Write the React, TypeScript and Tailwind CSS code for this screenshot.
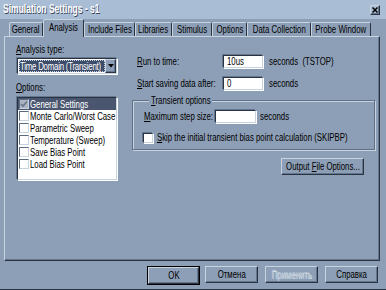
import React from "react";

const SUNKEN =
  "border border-t-[#2a3342] border-l-[#2a3342] border-r-[#c8d3e0] border-b-[#c8d3e0] shadow-[-1px_-1px_0_#66788f,1px_1px_0_#ffffff]";
const RAISED =
  "border border-t-[#c8d3e0] border-l-[#c8d3e0] border-r-[#2a3342] border-b-[#2a3342] shadow-[inset_-1px_-1px_0_#64768e]";

function T({ children, className = "" }: { children: React.ReactNode; className?: string }) {
  return (
    <span className={"inline-block whitespace-nowrap origin-left shrink-0 scale-x-[0.71] " + className}>
      {children}
    </span>
  );
}

function TC({ children, className = "" }: { children: React.ReactNode; className?: string }) {
  return (
    <span className={"inline-block whitespace-nowrap origin-center shrink-0 scale-x-[0.71] " + className}>
      {children}
    </span>
  );
}

function Tab({ label, w, selected }: { label: string; w: string; selected?: boolean }) {
  if (selected) {
    return (
      <div
        className={
          "relative z-10 -mb-[1px] h-[18px] bg-[#8d9fb6] border-t border-l border-r border-t-[#c8d3e0] border-l-[#c8d3e0] border-r-[#2a3342] rounded-t-[2px] flex items-center justify-center pb-[2px] " +
          w
        }
      >
        <TC>{label}</TC>
      </div>
    );
  }
  return (
    <div
      className={
        "h-[14px] border-t border-l border-r border-t-[#c8d3e0] border-l-[#c8d3e0] border-r-[#2a3342] rounded-t-[2px] flex items-center justify-center " +
        w
      }
    >
      <TC>{label}</TC>
    </div>
  );
}

function ListItem({ label, selected }: { label: string; selected?: boolean }) {
  return (
    <div className={"h-[12px] flex items-center " + (selected ? "bg-[#4a5670] text-white" : "")}>
      <div
        className={
          "ml-[1px] w-[10px] h-[10px] shrink-0 border border-t-[#5b6b82] border-l-[#5b6b82] border-r-[#c8d3e0] border-b-[#c8d3e0] flex items-center justify-center " +
          (selected ? "bg-[#aab4c2]" : "bg-white")
        }
      >
        {selected && (
          <svg width="8" height="8" viewBox="0 0 8 8">
            <path d="M1 4 L3 6 L7 1.5" stroke="#6c7686" strokeWidth="1.6" fill="none" />
          </svg>
        )}
      </div>
      <T className="ml-[1px] leading-[12px]">{label}</T>
    </div>
  );
}

function Btn({ children, className = "", disabled }: { children: React.ReactNode; className?: string; disabled?: boolean }) {
  return (
    <div
      className={
        "h-[17px] flex items-center justify-center " +
        RAISED +
        " " +
        (disabled ? "text-[#b9c6d6] [text-shadow:1px_1px_0_#d9e1ea] " : "") +
        className
      }
    >
      <TC>{children}</TC>
    </div>
  );
}

export default function App() {
  return (
    <div className="w-[386px] h-[290px] bg-[#8d9fb6] font-['Liberation_Sans',Arial,sans-serif] text-[11px] leading-[13px] text-black overflow-hidden flex flex-col border-b border-b-[#2a3342]">
      {/* Title bar */}
      <div className="h-[19px] shrink-0 bg-[#a9bdd5] flex items-center justify-between pl-[3px] pr-[6px]">
        <span className="inline-block whitespace-nowrap scale-x-[0.71] origin-left font-bold text-[12px] text-white [text-shadow:1px_1px_0_#3a465c]">
          Simulation Settings - s1
        </span>
        <div className={"w-[10px] h-[10px] bg-[#a9bdd5] flex items-center justify-center " + RAISED}>
          <svg width="6" height="6" viewBox="0 0 6 6">
            <path d="M0.5 0.5 L5.5 5.5 M5.5 0.5 L0.5 5.5" stroke="#000" strokeWidth="1.5" />
          </svg>
        </div>
      </div>

      {/* Tabs */}
      <div className="h-[17px] shrink-0 flex items-end pl-[9px]">
        <Tab label="General" w="w-[34px]" />
        <Tab label="Analysis" w="w-[41px]" selected />
        <Tab label="Include Files" w="w-[51px]" />
        <Tab label="Libraries" w="w-[37px]" />
        <Tab label="Stimulus" w="w-[40px]" />
        <Tab label="Options" w="w-[35px]" />
        <Tab label="Data Collection" w="w-[64px]" />
        <Tab label="Probe Window" w="w-[60px]" />
      </div>

      {/* Panel */}
      <div className={"ml-[4px] w-[376px] h-[225px] shrink-0 flex pt-[6px] pl-[11px] " + RAISED}>
        {/* Left column */}
        <div className="w-[102px] shrink-0 flex flex-col">
          <div className="h-[13px]">
            <T>
              <u>A</u>nalysis type:
            </T>
          </div>
          <div className={"mt-[2px] mx-[1px] h-[16px] bg-white flex items-stretch " + SUNKEN}>
            <div className="ml-[1px] my-[1px] w-[86px] bg-[#3d4c6a] text-white flex items-center pl-[1px] outline outline-1 outline-dotted outline-[#c8d3e0] -outline-offset-1">
              <T className="leading-[12px] tracking-[-0.3px]">Time Domain (Transient)</T>
            </div>
            <div className={"ml-auto w-[12px] bg-[#8d9fb6] flex items-center justify-center " + RAISED}>
              <svg width="6" height="4" viewBox="0 0 6 4">
                <path d="M0 0 L6 0 L3 3.5 Z" fill="#000" />
              </svg>
            </div>
          </div>
          <div className="mt-[7px] h-[13px]">
            <T>
              <u>O</u>ptions:
            </T>
          </div>
          <div className={"mt-[3px] mx-[1px] h-[83px] bg-white flex flex-col " + SUNKEN}>
            <ListItem label="General Settings" selected />
            <ListItem label="Monte Carlo/Worst Case" />
            <ListItem label="Parametric Sweep" />
            <ListItem label="Temperature (Sweep)" />
            <ListItem label="Save Bias Point" />
            <ListItem label="Load Bias Point" />
          </div>
        </div>

        {/* Right column */}
        <div className="ml-[14px] w-[243px] shrink-0 flex flex-col">
          <div className="mt-[11px] h-[15px] flex items-center">
            <div className="w-[90px] pl-[5px] shrink-0">
              <T>
                <u>R</u>un to time:
              </T>
            </div>
            <div className={"ml-[1px] w-[40px] h-[13px] shrink-0 bg-white flex items-center pl-[3px] " + SUNKEN}>
              <T>10us</T>
            </div>
            <div className="ml-[6px]">
              <T>seconds&nbsp;&nbsp;(TSTOP)</T>
            </div>
          </div>
          <div className="mt-[7px] h-[15px] flex items-center">
            <div className="w-[90px] pl-[5px] shrink-0">
              <T>
                <u>S</u>tart saving data after:
              </T>
            </div>
            <div className={"ml-[1px] w-[40px] h-[13px] shrink-0 bg-white flex items-center pl-[3px] " + SUNKEN}>
              <T>0</T>
            </div>
            <div className="ml-[6px]">
              <T>seconds</T>
            </div>
          </div>

          <fieldset className="mt-[3px] w-[243px] min-w-0 h-[56px] border border-[#5f7088] shadow-[inset_1px_1px_0_#c8d3e0,1px_1px_0_#c8d3e0] pl-[11px] pr-0 pb-0">
            <legend className="ml-[5px] w-[63px] h-[13px] pl-[2px] bg-[#8d9fb6] overflow-visible">
              <T>
                <u>T</u>ransient options
              </T>
            </legend>
            <div className="mt-[2px] h-[15px] flex items-center">
              <div className="w-[70px] shrink-0">
                <T>
                  <u>M</u>aximum step size:
                </T>
              </div>
              <div className={"ml-[1px] w-[41px] h-[13px] shrink-0 bg-white " + SUNKEN}></div>
              <div className="ml-[4px]">
                <T>seconds</T>
              </div>
            </div>
            <div className="mt-[7px] h-[13px] flex items-center -ml-[1px]">
              <div className={"w-[10px] h-[10px] shrink-0 bg-white " + SUNKEN}></div>
              <div className="ml-[4px]">
                <T>
                  <u>S</u>kip the initial transient bias point calculation&nbsp;(SKIPBP)
                </T>
              </div>
            </div>
          </fieldset>

          <Btn className="self-end mr-[11px] mt-[8px] w-[83px]">
            Output <u>F</u>ile Options...
          </Btn>
        </div>
      </div>

      {/* Bottom buttons */}
      <div className="mt-[5px] flex justify-end pr-[8px]">
        <div className="border border-black">
          <Btn className="w-[51px] h-[15px]">OK</Btn>
        </div>
        <Btn className="ml-[5px] w-[53px]">Отмена</Btn>
        <Btn className="ml-[7px] w-[53px]" disabled>
          Применить
        </Btn>
        <Btn className="ml-[7px] w-[53px]">Справка</Btn>
      </div>
    </div>
  );
}
